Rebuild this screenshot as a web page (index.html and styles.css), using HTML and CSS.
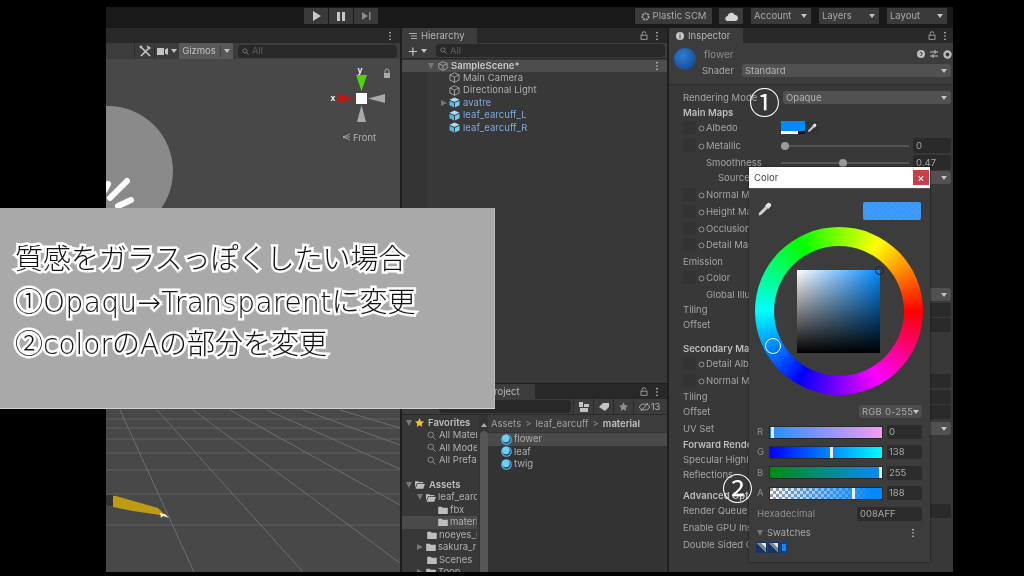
FILE: index.html
```html
<!DOCTYPE html>
<html lang="ja">
<head>
<meta charset="utf-8">
<title>Unity Editor</title>
<link rel="stylesheet" href="styles.css">
</head>
<body>
<svg class="defs" width="0" height="0" aria-hidden="true">
  <symbol id="dots" viewBox="0 0 4 12"><circle cx="2" cy="2" r="1"/><circle cx="2" cy="6" r="1"/><circle cx="2" cy="10" r="1"/></symbol>
  <symbol id="lock" viewBox="0 0 10 12"><path d="M2.5 5V3a2.5 2 0 0 1 5 0" fill="none" stroke="currentColor" stroke-width="1"/><rect x="1" y="5.5" width="8" height="5.5" fill="none" stroke="currentColor"/></symbol>
  <symbol id="cube" viewBox="0 0 12 12"><path d="M6 .8 11 3.2V8.8L6 11.2 1 8.8V3.2ZM1 3.2 6 5.6 11 3.2M6 5.6V11.2" fill="none" stroke="#b4b4b4" stroke-width=".9"/></symbol>
  <symbol id="prefab" viewBox="0 0 12 12"><path d="M6 .5 11.5 3 6 5.5.5 3Z" fill="#a9dcf5"/><path d="M.5 4 5.5 6.4V11.5L.5 9Z" fill="#58b4e8"/><path d="M11.5 4 6.5 6.4V11.5L11.5 9Z" fill="#7cc8ee"/></symbol>
  <symbol id="folder" viewBox="0 0 12 10"><path d="M0 1h4.5l1 1.2H12V10H0Z" fill="#bdbdbd"/></symbol>
  <symbol id="folder-open" viewBox="0 0 12 10"><path d="M0 1h4l1 1h5v1.600H2.400L0 9ZM3 4.400h9L9.800 10H.6Z" fill="#bdbdbd"/></symbol>
  <symbol id="pin" viewBox="0 0 8 8"><circle cx="4" cy="4" r="2.800" fill="none" stroke="#a8a8a8" stroke-width=".9"/></symbol>
  <symbol id="search" viewBox="0 0 12 12"><circle cx="5" cy="5" r="3.600" fill="none" stroke="#9a9a9a" stroke-width="1.100"/><path d="M7.600 7.600 11.400 11.400" stroke="#9a9a9a" stroke-width="1.200"/></symbol>
  <symbol id="dropper" viewBox="0 0 14 14"><path d="M1.500 12.500 2 10 8 4 10 6 4 12Z" fill="#d0d0d0"/><path d="M7.500 3.500 9.500 1.500a1.600 1.600 0 0 1 3 3L10.500 6.500Z" fill="#e4e4e4"/></symbol>
  <symbol id="swatch" viewBox="0 0 11 11"><rect width="11" height="11" fill="#16355f"/><path d="M1 1h9v9Z" fill="#e8e8e8"/><path d="M1 1 5 1 10 6V10Z" fill="#79838f"/></symbol>
  <symbol id="material" viewBox="0 0 12 12"><circle cx="6" cy="6" r="5.800" fill="#58b8e8"/><circle cx="6" cy="6" r="4.600" fill="#234a66"/><circle cx="5.300" cy="5" r="4.100" fill="#6fd0f5"/></symbol>
</svg>

<div class="app">
  <header class="toolbar">
    <div class="play">
      <button class="tb-btn"><svg width="9" height="10" viewBox="0 0 9 10"><path d="M1 0 9 5 1 10Z" fill="#c8c8c8"/></svg></button>
      <button class="tb-btn"><svg width="8" height="9" viewBox="0 0 8 9"><path d="M0 0h3v9H0ZM5 0h3v9H5Z" fill="#c8c8c8"/></svg></button>
      <button class="tb-btn"><svg width="9" height="8" viewBox="0 0 9 8"><path d="M0 0 6 4 0 8ZM7 0h1.500v8H7Z" fill="#8a8a8a"/></svg></button>
    </div>
    <div class="tb-right">
      <button class="tb-item plastic"><svg width="9" height="9" viewBox="0 0 10 10"><circle cx="5" cy="5" r="3.500" fill="none" stroke="#a8a8a8" stroke-width="2" stroke-dasharray="2 1"/></svg>Plastic SCM</button>
      <button class="tb-item cloud"><svg width="13" height="9" viewBox="0 0 13 9"><path d="M3 9a2.500 2.500 0 0 1-.4-5A3.800 3.800 0 0 1 9.800 3 3 3 0 0 1 10 9Z" fill="#d4d4d4"/></svg></button>
      <button class="tb-item menu">Account<i class="caret"></i></button>
      <button class="tb-item menu">Layers<i class="caret"></i></button>
      <button class="tb-item menu">Layout<i class="caret"></i></button>
    </div>
  </header>

  <main class="panes">
    <section class="scene">
      <div class="tabbar"><span class="tab-spacer"></span><svg class="ico-dots"><use href="#dots"/></svg></div>
      <div class="scene-tools">
        <span class="tool"><svg width="12" height="12" viewBox="0 0 12 12"><path d="M1 1 11 11M11 2 2 11M1 3 3 1M8 1 11 4" stroke="#c4c4c4" stroke-width="1.600" fill="none"/></svg></span>
        <span class="tool cam"><svg width="11" height="7" viewBox="0 0 11 7"><path d="M0 0h7v7H0ZM8 1.500 11 0V7L8 5.500Z" fill="#c4c4c4"/></svg><i class="caret"></i></span>
        <span class="tool gizmos">Gizmos<b></b><i class="caret"></i></span>
        <span class="search wide"><svg width="7" height="7"><use href="#search"/></svg>All</span>
      </div>
      <svg class="viewport" viewBox="106 59 294 513" preserveAspectRatio="none">
        <circle cx="108" cy="171" r="65" fill="#8a8a8a"/>
        <path d="M110 198 127 181M118 206 131 200M105 190 108 184" stroke="#fff" stroke-width="6" stroke-linecap="round"/>
        <g stroke="#5f5f5f" stroke-width="1" fill="none">
          <path d="M106 419H400M106 428H400M106 439H400M106 453H400M106 470H400M106 494H400M106 525H400"/>
        </g>
        <g stroke="#6e6e6e" stroke-width="1" fill="none">
          <path d="M120 410 194 572M157 410 303 572M193 410 400 563M230 410 400 505M267 410 400 469M303 410 400 445M340 410 400 428"/>
        </g>
        <path d="M106 495H113L113 506 106 505Z" fill="#333"/>
        <path d="M113 496 116 496 158 508 163 513 160 515 133 511 113 507Z" fill="#bd9c14"/>
        <path d="M160 513 165 514 169 518 163 516 161 518Z" fill="#f4efd8"/>
        <text class="gz-label" x="360" y="73" text-anchor="middle">y</text>
        <path d="M356 75H367L361.500 91Z" fill="#4fd312"/>
        <text class="gz-label" x="333" y="101" text-anchor="middle">x</text>
        <path d="M338 94 355 98.500 338 103Z" fill="#b81a14"/>
        <path d="M368 98.500 385 94V103Z" fill="#a9a9a9"/>
        <path d="M361.500 105 366 122H357Z" fill="#a9a9a9"/>
        <rect x="356" y="93" width="11" height="11" fill="#fff"/>
        <path d="M385 73v-2a2 2 0 0 1 4 0v2" fill="none" stroke="#aaa"/><rect x="384" y="73" width="6" height="5" fill="#aaa"/>
        <path d="M350 134 343 137 350 140M343 137H350" fill="none" stroke="#b5b5b5" stroke-width=".8"/>
        <text class="gz-front" x="353" y="141">Front</text>
      </svg>
    </section>

    <div class="middle">
      <section class="hier">
        <div class="tabbar">
          <span class="tab"><svg width="8" height="6" viewBox="0 0 8 6"><path d="M0 .5h8M2 3h6M2 5.500h6" stroke="#aaa"/></svg>Hierarchy</span>
          <span class="tab-spacer"></span>
          <svg class="ico-lock"><use href="#lock"/></svg>
          <svg class="ico-dots"><use href="#dots"/></svg>
        </div>
        <div class="pane-tools">
          <span class="plus">+<i class="caret"></i></span>
          <span class="search"><svg width="7" height="7"><use href="#search"/></svg>All</span>
        </div>
        <div class="hier-list">
          <div class="h-row scene-row"><i class="arrow down"></i><svg width="10" height="10"><use href="#cube"/></svg><b>SampleScene*</b><svg class="ico-dots end"><use href="#dots"/></svg></div>
          <div class="h-row"><svg width="11" height="11"><use href="#cube"/></svg>Main Camera</div>
          <div class="h-row"><svg width="11" height="11"><use href="#cube"/></svg>Directional Light</div>
          <div class="h-row blue"><i class="arrow right"></i><svg width="11" height="11"><use href="#prefab"/></svg>avatre</div>
          <div class="h-row blue"><svg width="11" height="11"><use href="#prefab"/></svg>leaf_earcuff_L</div>
          <div class="h-row blue"><svg width="11" height="11"><use href="#prefab"/></svg>leaf_earcuff_R</div>
        </div>
      </section>

      <section class="project">
        <div class="tabbar">
          <span class="tab project-tab">Project</span>
          <span class="tab-spacer"></span>
          <svg class="ico-lock"><use href="#lock"/></svg>
          <svg class="ico-dots"><use href="#dots"/></svg>
        </div>
        <div class="pane-tools project-tools">
          <span class="search grow"></span>
          <span class="p-btn"><svg width="10" height="10" viewBox="0 0 10 10"><path d="M0 0h4v5H0ZM5 2h5v3H5ZM1 6h8v4H1Z" fill="#c4c4c4"/></svg></span>
          <span class="p-btn"><svg width="10" height="8" viewBox="0 0 10 8"><path d="M0 4 4 0h6v4L6 8Z" fill="#c4c4c4"/></svg></span>
          <span class="p-btn"><svg width="9" height="9" viewBox="0 0 10 10"><path d="M5 0 6.500 3.500 10 4 7.500 6.500 8 10 5 8 2 10 2.500 6.500 0 4 3.500 3.500Z" fill="#8f8f8f"/></svg></span>
          <span class="p-btn count"><svg width="11" height="8" viewBox="0 0 11 8"><ellipse cx="5.500" cy="4" rx="5" ry="3" fill="none" stroke="#a8a8a8"/><path d="M2 8 9 0" stroke="#a8a8a8"/></svg>13</span>
        </div>
        <div class="p-body">
          <nav class="tree">
            <div class="t-row head"><i class="arrow down"></i><svg width="9" height="9" viewBox="0 0 10 10"><path d="M5 0 6.500 3.500 10 4 7.500 6.500 8 10 5 8 2 10 2.500 6.500 0 4 3.500 3.500Z" fill="#f2bd32"/></svg>Favorites</div>
            <div class="t-row l2"><svg width="9" height="9"><use href="#search"/></svg>All Materials</div>
            <div class="t-row l2"><svg width="9" height="9"><use href="#search"/></svg>All Models</div>
            <div class="t-row l2"><svg width="9" height="9"><use href="#search"/></svg>All Prefabs</div>
            <div class="t-row blank"></div>
            <div class="t-row head"><i class="arrow down"></i><svg width="10" height="9"><use href="#folder-open"/></svg>Assets</div>
            <div class="t-row l1"><i class="arrow down"></i><svg width="10" height="9"><use href="#folder-open"/></svg>leaf_earcuff</div>
            <div class="t-row l3"><svg width="10" height="8"><use href="#folder"/></svg>fbx</div>
            <div class="t-row l3 sel"><svg width="10" height="8"><use href="#folder"/></svg>material</div>
            <div class="t-row l1b"><svg width="10" height="8"><use href="#folder"/></svg>noeyes_hair</div>
            <div class="t-row l1"><i class="arrow right"></i><svg width="10" height="8"><use href="#folder"/></svg>sakura_ring</div>
            <div class="t-row l1b"><svg width="10" height="8"><use href="#folder"/></svg>Scenes</div>
            <div class="t-row l1"><i class="arrow right"></i><svg width="10" height="8"><use href="#folder"/></svg>Toon</div>
          </nav>
          <div class="scrollbar"><i class="arrow up"></i><span></span></div>
          <div class="assets">
            <div class="crumbs">Assets<em>&gt;</em>leaf_earcuff<em>&gt;</em><b>material</b></div>
            <div class="a-row sel"><svg width="11" height="11"><use href="#material"/></svg>flower</div>
            <div class="a-row"><svg width="11" height="11"><use href="#material"/></svg>leaf</div>
            <div class="a-row"><svg width="11" height="11"><use href="#material"/></svg>twig</div>
          </div>
        </div>
      </section>
    </div>

    <section class="inspector">
      <div class="tabbar">
        <span class="tab"><svg width="8" height="8" viewBox="0 0 8 8"><circle cx="4" cy="4" r="4" fill="#c8c8c8"/><path d="M4 1.500v1M4 3.500v3" stroke="#333" stroke-width="1"/></svg>Inspector</span>
        <span class="tab-spacer"></span>
        <svg class="ico-lock"><use href="#lock"/></svg>
        <svg class="ico-dots"><use href="#dots"/></svg>
      </div>
      <div class="i-head">
        <span class="sphere"></span>
        <div class="i-title">
          <div class="name-row"><span class="mat-name">flower</span>
            <span class="head-icons">
              <svg width="8" height="8" viewBox="0 0 8 8"><circle cx="4" cy="4" r="4" fill="#bdbdbd"/><path d="M4 5v1M2.800 3a1.200 1 0 1 1 1.200 1.500" stroke="#333" fill="none"/></svg>
              <svg width="8" height="8" viewBox="0 0 8 8"><path d="M0 2h8M0 6h8M5 0v4M3 4v4" stroke="#bdbdbd"/></svg>
              <svg width="9" height="9" viewBox="0 0 8 8"><circle cx="4" cy="4" r="2.700" fill="none" stroke="#bdbdbd" stroke-width="2"/></svg>
            </span>
          </div>
          <div class="shader-row"><span>Shader</span><span class="dd">Standard<i class="caret"></i></span></div>
        </div>
      </div>
      <div class="i-body">
        <div class="r h15"><label>Rendering Mode</label><span class="dd ctl">Opaque<i class="caret"></i></span></div>
        <div class="r h15"><label class="bold">Main Maps</label></div>
        <div class="r h18 m"><u></u><svg class="pin"><use href="#pin"/></svg><label>Albedo</label><span class="albedo"><span class="al-sw"><i></i></span><span class="al-drop"><svg width="10" height="10"><use href="#dropper"/></svg></span></span></div>
        <div class="r h17 m"><u></u><svg class="pin"><use href="#pin"/></svg><label>Metallic</label><span class="slider"><i class="k0"></i></span><span class="field">0</span></div>
        <div class="r h15 in1"><label>Smoothness</label><span class="slider"><i class="k47"></i></span><span class="field">0.47</span></div>
        <div class="r h17 in2"><label>Source</label><span class="dd ctl">Metallic Alpha<i class="caret"></i></span></div>
        <div class="r h17 m"><u></u><svg class="pin"><use href="#pin"/></svg><label>Normal Map</label></div>
        <div class="r h17 m"><u></u><svg class="pin"><use href="#pin"/></svg><label>Height Map</label></div>
        <div class="r h16 m"><u></u><svg class="pin"><use href="#pin"/></svg><label>Occlusion</label></div>
        <div class="r h17 m"><u></u><svg class="pin"><use href="#pin"/></svg><label>Detail Mask</label></div>
        <div class="r h16"><label>Emission</label></div>
        <div class="r h17 m"><u></u><svg class="pin"><use href="#pin"/></svg><label>Color</label></div>
        <div class="r h15 in1"><label>Global Illumination</label><span class="dd ctl"><i class="caret"></i></span></div>
        <div class="r h15"><label>Tiling</label><span class="field fill"></span></div>
        <div class="r h24"><label>Offset</label><span class="field fill"></span></div>
        <div class="r h15"><label class="bold">Secondary Maps</label></div>
        <div class="r h17 m"><u></u><svg class="pin"><use href="#pin"/></svg><label>Detail Albedo</label></div>
        <div class="r h16 m"><u></u><svg class="pin"><use href="#pin"/></svg><label>Normal Map</label><span class="field fill"></span></div>
        <div class="r h15"><label>Tiling</label><span class="field fill"></span></div>
        <div class="r h17"><label>Offset</label><span class="field fill"></span></div>
        <div class="r h16"><label>UV Set</label><span class="dd ctl">UV0<i class="caret"></i></span></div>
        <div class="r h15"><label class="bold">Forward Rendering</label></div>
        <div class="r h15"><label>Specular Highlights</label></div>
        <div class="r h21"><label>Reflections</label></div>
        <div class="r h15"><label class="bold">Advanced Options</label></div>
        <div class="r h17"><label>Render Queue</label><span class="field fill"></span></div>
        <div class="r h17"><label>Enable GPU Instancing</label></div>
        <div class="r h17"><label>Double Sided GI</label></div>
      </div>
    </section>
  </main>

  <aside class="picker">
    <div class="p-title"><span>Color</span><span class="close">×</span></div>
    <div class="p-top">
      <svg width="15" height="15"><use href="#dropper"/></svg>
      <span class="preview"></span>
    </div>
    <div class="wheel">
      <span class="wheel-hole"></span>
      <span class="sv"></span>
      <span class="h-small"></span>
      <span class="h-big"></span>
    </div>
    <div class="mode"><span class="mode-btn">RGB 0-255<i class="caret"></i></span></div>
    <div class="ch"><span class="ch-l">R</span><span class="bar bar-r"><i class="t0"></i></span><span class="ch-v">0</span></div>
    <div class="ch"><span class="ch-l">G</span><span class="bar bar-g"><i class="t54"></i></span><span class="ch-v">138</span></div>
    <div class="ch"><span class="ch-l">B</span><span class="bar bar-b"><i class="t100"></i></span><span class="ch-v">255</span></div>
    <div class="ch"><span class="ch-l">A</span><span class="bar bar-a"><i class="t74"></i></span><span class="ch-v">188</span></div>
    <div class="hex"><span>Hexadecimal</span><span class="hex-v">008AFF</span></div>
    <div class="sw-head"><i class="arrow down"></i><span>Swatches</span><svg class="ico-dots end"><use href="#dots"/></svg></div>
    <div class="sw-list">
      <svg width="11" height="11"><use href="#swatch"/></svg>
      <svg width="11" height="11"><use href="#swatch"/></svg>
      <span class="sw-blue"></span>
    </div>
  </aside>

  <span class="num num-1">①</span>
  <span class="num num-2">②</span>
</div>

<aside class="caption">
  <p>質感をガラスっぽくしたい場合</p>
  <p>①<span class="wide-run">Opaqu→Transparent</span>に変更</p>
  <p>②colorのAの部分を変更</p>
</aside>
</body>
</html>
```
FILE: styles.css
```css
* { box-sizing: border-box; }
html, body { margin: 0; height: 100%; background: #000; overflow: hidden; }
body {
  width: 1024px; height: 576px; position: relative;
  padding: 7px 71px 4px 106px;
  font: 9.5px/14px Inter, "Liberation Sans", sans-serif; color: #b4b4b4;
}
.defs { position: absolute; }
i, u, em { font-style: normal; text-decoration: none; }
button { font: inherit; color: inherit; border: 0; padding: 0; }

.app { position: relative; width: 847px; height: 565px; display: flex; flex-direction: column; background: #191919; filter: blur(.35px); }

.caret { display: inline-block; width: 0; height: 0; border: 3.5px solid transparent; border-top: 4px solid #c4c4c4; border-bottom: 0; flex: none; margin-left: auto; }
.arrow { display: inline-block; width: 0; height: 0; border: 3.5px solid transparent; flex: none; }
.arrow.down { border-top: 6px solid #777; border-bottom: 0; }
.arrow.right { border-left: 6px solid #777; border-right: 0; }
.arrow.up { border-bottom: 4px solid #aaa; border-top: 0; }

/* toolbar */
.toolbar { height: 21px; flex: none; display: flex; justify-content: space-between; padding: 1px 6px 4px 198px; }
.play { display: flex; gap: 1px; }
.tb-btn { width: 24px; height: 16px; background: #3a3a3a; display: flex; align-items: center; justify-content: center; }
.tb-right { display: flex; gap: 8px; }
.tb-item { height: 16px; background: #3a3a3a; display: flex; align-items: center; color: #a8a8a8; }
.plastic { width: 77px; justify-content: center; gap: 3px; margin-right: -1px; }
.cloud { width: 24px; justify-content: center; }
.menu { width: 60px; padding: 0 3px; justify-content: space-between; }
.menu .caret { margin-right: 1px; }

/* panes */
.panes { flex: 1; min-height: 0; display: grid; grid-template-columns: 294px 265px 1fr; gap: 2px; background: #1e1e1e; }
.tabbar { height: 15px; flex: none; display: flex; align-items: center; background: #282828; padding-right: 8px; gap: 7px; }
.inspector .tabbar { padding-right: 6px; }
.tab-spacer { flex: 1; }
.tab { height: 15px; background: #3c3c3c; display: flex; align-items: center; gap: 4px; padding: 0 13px 0 7px; color: #b4b4b4; }
.ico-dots { width: 4px; height: 10px; fill: #c8c8c8; flex: none; }
.ico-lock { width: 8px; height: 9px; color: #bbb; flex: none; }

.scene { display: flex; flex-direction: column; min-height: 0; }
.scene-tools { height: 16px; flex: none; background: #3c3c3c; display: flex; align-items: center; justify-content: flex-end; padding-right: 3px; }
.tool { height: 16px; display: flex; align-items: center; justify-content: center; border-left: 1px solid #2c2c2c; }
.tool:first-child { width: 20px; }
.cam { width: 25px; gap: 3px; }
.cam .caret { margin-left: 0; }
.gizmos { width: 54px; background: #585858; gap: 3px; color: #c0c0c0; margin-right: 5px; border: 0; }
.gizmos b { width: 1px; height: 11px; background: #3c3c3c; margin-left: 1px; }
.gizmos .caret { margin-left: 0; }
.search { height: 13px; background: #282828; border-radius: 4px; display: flex; align-items: center; gap: 3px; padding-left: 4px; color: #5f5f5f; }
.search.wide { width: 159px; }
.viewport { flex: 1; min-height: 0; width: 100%; display: block; background: #484848; }
.gz-label { font: bold 8.5px Inter, sans-serif; fill: #eee; }
.gz-front { font: 9.5px Inter, sans-serif; fill: #b0b0b0; }

.middle { display: grid; grid-template-rows: 355px 1fr; gap: 1px; min-height: 0; }
.hier, .project { display: flex; flex-direction: column; min-height: 0; background: #383838; }
.pane-tools { height: 16px; flex: none; background: #3c3c3c; display: flex; align-items: center; padding: 0 2px; border-bottom: 1px solid #2a2a2a; }
.plus { width: 32px; display: flex; align-items: center; gap: 2px; padding-left: 3px; padding-right: 10px; font-size: 18px; color: #c8c8c8; font-weight: 300; }
.pane-tools .search { flex: 1; }
.hier-list { flex: 1; background: linear-gradient(to right, #343434 25px, #383838 25px); padding-top: 1px; }
.h-row { height: 12.5px; display: flex; align-items: center; gap: 3px; padding-left: 47px; position: relative; color: #aeaeae; letter-spacing: .05px; }
.h-row svg { flex: none; }
.h-row .arrow { position: absolute; left: 39px; }
.h-row.blue { color: #7ea9dc; }
.scene-row { background: #4d4d4d; height: 11.5px; padding-left: 26px; color: #c8c8c8; gap: 3px; }
.scene-row .arrow { position: static; margin-right: 1px; margin-left: 0; }
.scene-row b { font-weight: 600; flex: 1; }
.scene-row .end { margin-right: 8px; }

.project { background: #383838; overflow: hidden; }
.project-tab { width: 133px; padding-left: 86px; }
.project-tools .search.grow { height: 13px; margin-left: 35px; margin-right: 2px; }
.p-btn { width: 20px; height: 15px; display: flex; align-items: center; justify-content: center; border-left: 1px solid #2a2a2a; flex: none; }
.count { width: 32px; gap: 1px; }
.p-body { flex: 1; min-height: 0; display: flex; }
.tree { width: 75px; margin-right: 2px; flex: none; overflow: hidden; padding-top: 1.5px; color: #aeaeae; }
.t-row { height: 12.5px; display: flex; align-items: center; gap: 2px; white-space: nowrap; overflow: hidden; }
.t-row svg { flex: none; }
.t-row.head { padding-left: 4px; font-weight: 600; color: #bdbdbd; gap: 3px; }
.t-row.head svg { margin-right: 1px; }
.t-row.l2 { padding-left: 25px; gap: 3px; }
.t-row.l1 { padding-left: 15px; }
.t-row.l1 .arrow { margin-right: 1px; }
.t-row.l1b { padding-left: 25px; }
.t-row.l3 { padding-left: 36px; }
.t-row.sel { background: #4a4a4a; }
.t-row.blank { height: 12px; }
.scrollbar { width: 9px; flex: none; background: #333; display: flex; flex-direction: column; align-items: center; padding-top: 8px; gap: 4px; }
.scrollbar span { width: 8px; flex: 1; background: #565656; border-radius: 4px 4px 0 0; }
.assets { flex: 1; min-width: 0; background: #333; }
.crumbs { height: 17px; background: #3c3c3c; display: flex; align-items: center; padding-left: 3px; gap: 4px; margin-bottom: 1px; color: #9f9f9f; }
.crumbs em { color: #8a8a8a; }
.crumbs b { font-weight: 600; color: #c0c0c0; }
.a-row { height: 12.5px; display: flex; align-items: center; gap: 2px; padding-left: 13px; color: #aeaeae; }
.a-row.sel { background: #4a4a4a; }

.inspector { background: #383838; display: flex; flex-direction: column; min-width: 0; overflow: hidden; }
.i-head { height: 42px; flex: none; display: flex; gap: 6px; padding: 5px 2px 0 5px; border-bottom: 1px solid #2c2c2c; background: #3c3c3c; }
.sphere { width: 22px; height: 22px; border-radius: 50%; flex: none; background: radial-gradient(circle at 40% 35%, #2f7ed0, #1c56a4 60%, #143a70); }
.i-title { flex: 1; min-width: 0; }
.name-row { display: flex; justify-content: space-between; align-items: center; height: 12px; margin-bottom: 4px; padding-left: 2px; font-size: 10px; color: #8f8f8f; }
.head-icons { display: flex; gap: 5px; align-items: center; margin-right: -1px; }
.shader-row { display: flex; align-items: center; gap: 8px; color: #a8a8a8; height: 13px; }
.shader-row > span:first-child { width: 32px; flex: none; }
.dd { height: 13px; background: #515151; border-radius: 3px; display: flex; align-items: center; padding: 0 4px 0 3px; flex: 1; min-width: 0; color: #b4b4b4; }

.i-body { flex: 1; padding: 6px 2px 0 14px; min-height: 0; }
.r { display: flex; align-items: flex-start; color: #a4a4a4; position: relative; }
.r label { width: 98px; flex: none; white-space: nowrap; overflow: hidden; }
.r label.bold { width: 160px; font-weight: 600; color: #bdbdbd; }
.h15 { height: 15px; } .h16 { height: 16px; } .h17 { height: 17px; } .h18 { height: 18px; } .h21 { height: 21px; } .h24 { height: 24px; }
.in1 label { margin-left: 23px; width: 75px; }
.in2 label { margin-left: 35px; width: 63px; }
.m u { width: 13px; height: 13px; flex: none; background: #333; margin-right: 2px; }
.m .pin { width: 7px; height: 7px; margin: 4px 1px 0 0; flex: none; }
.m label { width: 75px; }
.ctl { flex: 1; margin-left: 2px; }
.albedo { display: flex; height: 13px; }
.al-sw { width: 24px; height: 13px; background: #008aff; position: relative; display: block; }
.al-sw i { position: absolute; left: 0; right: 0; bottom: 0; height: 3px; background: linear-gradient(to right, #fff 70%, #111 70%); }
.al-drop { width: 14px; height: 13px; background: #333; display: flex; align-items: center; justify-content: center; }
.slider { width: 128px; height: 14px; position: relative; flex: none; margin-right: 4px; }
.slider::before { content: ""; position: absolute; left: 0; right: 0; top: 6px; height: 2px; background: #555; }
.slider i { position: absolute; top: 3px; width: 8px; height: 8px; border-radius: 50%; background: #9a9a9a; }
.k0 { left: 0; } .k47 { left: 58px; }
.field { width: 38px; height: 15px; background: #2a2a2a; border-radius: 3px; padding: 1px 3px; flex: none; margin-top: -1px; }
.field.fill { margin-left: auto; width: 60px; height: 14px; margin-top: 0; }

.picker { position: absolute; left: 643px; top: 160px; width: 181px; height: 395px; background: #3c3c3c; box-shadow: 0 0 2px #111; color: #a8a8a8; }
.p-title { height: 22px; background: #fff; display: flex; align-items: center; justify-content: space-between; padding: 0 1px 0 5px; color: #444; border-bottom: 1px solid #555; }
.close { width: 16px; height: 15px; background: #c8414a; color: #fff; display: flex; align-items: center; justify-content: center; font-size: 11px; }
.p-top { height: 18px; margin-top: 13px; display: flex; align-items: flex-start; justify-content: space-between; padding: 0 9px 0 8px; }
.preview { width: 58px; height: 18px; border-radius: 2px; background: conic-gradient(#3a9dff 25%, #3d96f0 0 50%, #3a9dff 0 75%, #3d96f0 0) 0 0 / 6px 6px; }
.wheel { width: 168px; height: 168px; margin: 7px 0 0 6px; border-radius: 50%; position: relative; background: conic-gradient(from 90deg, #f00, #f0f, #00f, #0ff, #0f0, #ff0, #f00); }
.wheel-hole { position: absolute; inset: 19px; border-radius: 50%; background: #3c3c3c; }
.sv { position: absolute; left: 42px; top: 43px; width: 83px; height: 83px; background: linear-gradient(to top, #000, transparent), linear-gradient(to right, #fff, #008aff); }
.h-small { position: absolute; left: 120px; top: 39px; width: 9px; height: 9px; border-radius: 50%; border: 1.5px solid #222; }
.h-big { position: absolute; left: 10px; top: 111px; width: 16px; height: 16px; border-radius: 50%; border: 1.5px solid #fff; }
.mode { display: flex; justify-content: flex-end; padding-right: 8px; margin-top: 10px; }
.mode-btn { width: 63px; height: 13px; background: #4d4d4d; border-radius: 3px; display: flex; align-items: center; padding: 0 3px; letter-spacing: .2px; white-space: nowrap; }
.ch { height: 20.3px; display: flex; align-items: center; padding: 0 8px; gap: 4px; }
.mode + .ch { margin-top: 4px; }
.ch-l { width: 8px; flex: none; color: #8f8f8f; }
.bar { width: 114px; height: 13px; position: relative; flex: none; border: 1px solid #2a2a2a; }
.bar i { position: absolute; top: 0; bottom: 0; width: 3px; background: #eee; }
.t0 { left: 1px; } .t54 { left: 60px; } .t100 { right: 0; } .t74 { left: 82px; }
.bar-r { background: linear-gradient(to right, #1f90ff, #f79af5); }
.bar-g { background: linear-gradient(to right, #00f, #0ff); }
.bar-b { background: linear-gradient(to right, #008c0e, #0a8aff); }
.bar-a { background: linear-gradient(to right, rgba(0,138,255,0), #008aff 92%), conic-gradient(#fff 25%, #999 0 50%, #fff 0 75%, #999 0) 0 0 / 6px 6px; }
.ch-v { flex: 1; height: 14px; background: #2c2c2c; border-radius: 2px; padding-left: 2px; }
.hex { display: flex; justify-content: space-between; align-items: center; padding: 0 8px; margin-top: 1px; height: 20px; color: #8f8f8f; }
.hex-v { width: 65px; height: 14px; background: #2c2c2c; border-radius: 2px; padding-left: 3px; color: #a8a8a8; }
.sw-head { display: flex; align-items: center; gap: 4px; padding: 0 15px 0 8px; height: 18px; }
.sw-head span { flex: 1; }
.sw-list { display: flex; gap: 1px; padding-left: 7px; }
.sw-blue { width: 8px; height: 11px; background: #1b3f70; border: 2px solid #1b3f70; box-shadow: inset 0 0 0 4px #0a8aff; }

.num { position: absolute; font: 31px/31px "Noto Sans CJK JP", sans-serif; color: #fff; }
.num-1 { left: 643px; top: 78px; }
.num-2 { left: 616px; top: 464px; }

.caption {
  position: absolute; left: 0; top: 208px; width: 495px; height: 201px;
  background: #a9a9a9; border-bottom: 1px solid #d0d0d0; border-right: 1px solid #b8b8b8; padding: 31px 0 0 15px;
  font: 300 28px/42.5px "DejaVu Sans", "Noto Sans CJK JP", sans-serif; color: #111;
  -webkit-text-stroke: 5px #fff; paint-order: stroke fill; filter: blur(.35px);
}
.caption p { margin: 0; white-space: nowrap; }
.wide-run { letter-spacing: .4px; }
```
